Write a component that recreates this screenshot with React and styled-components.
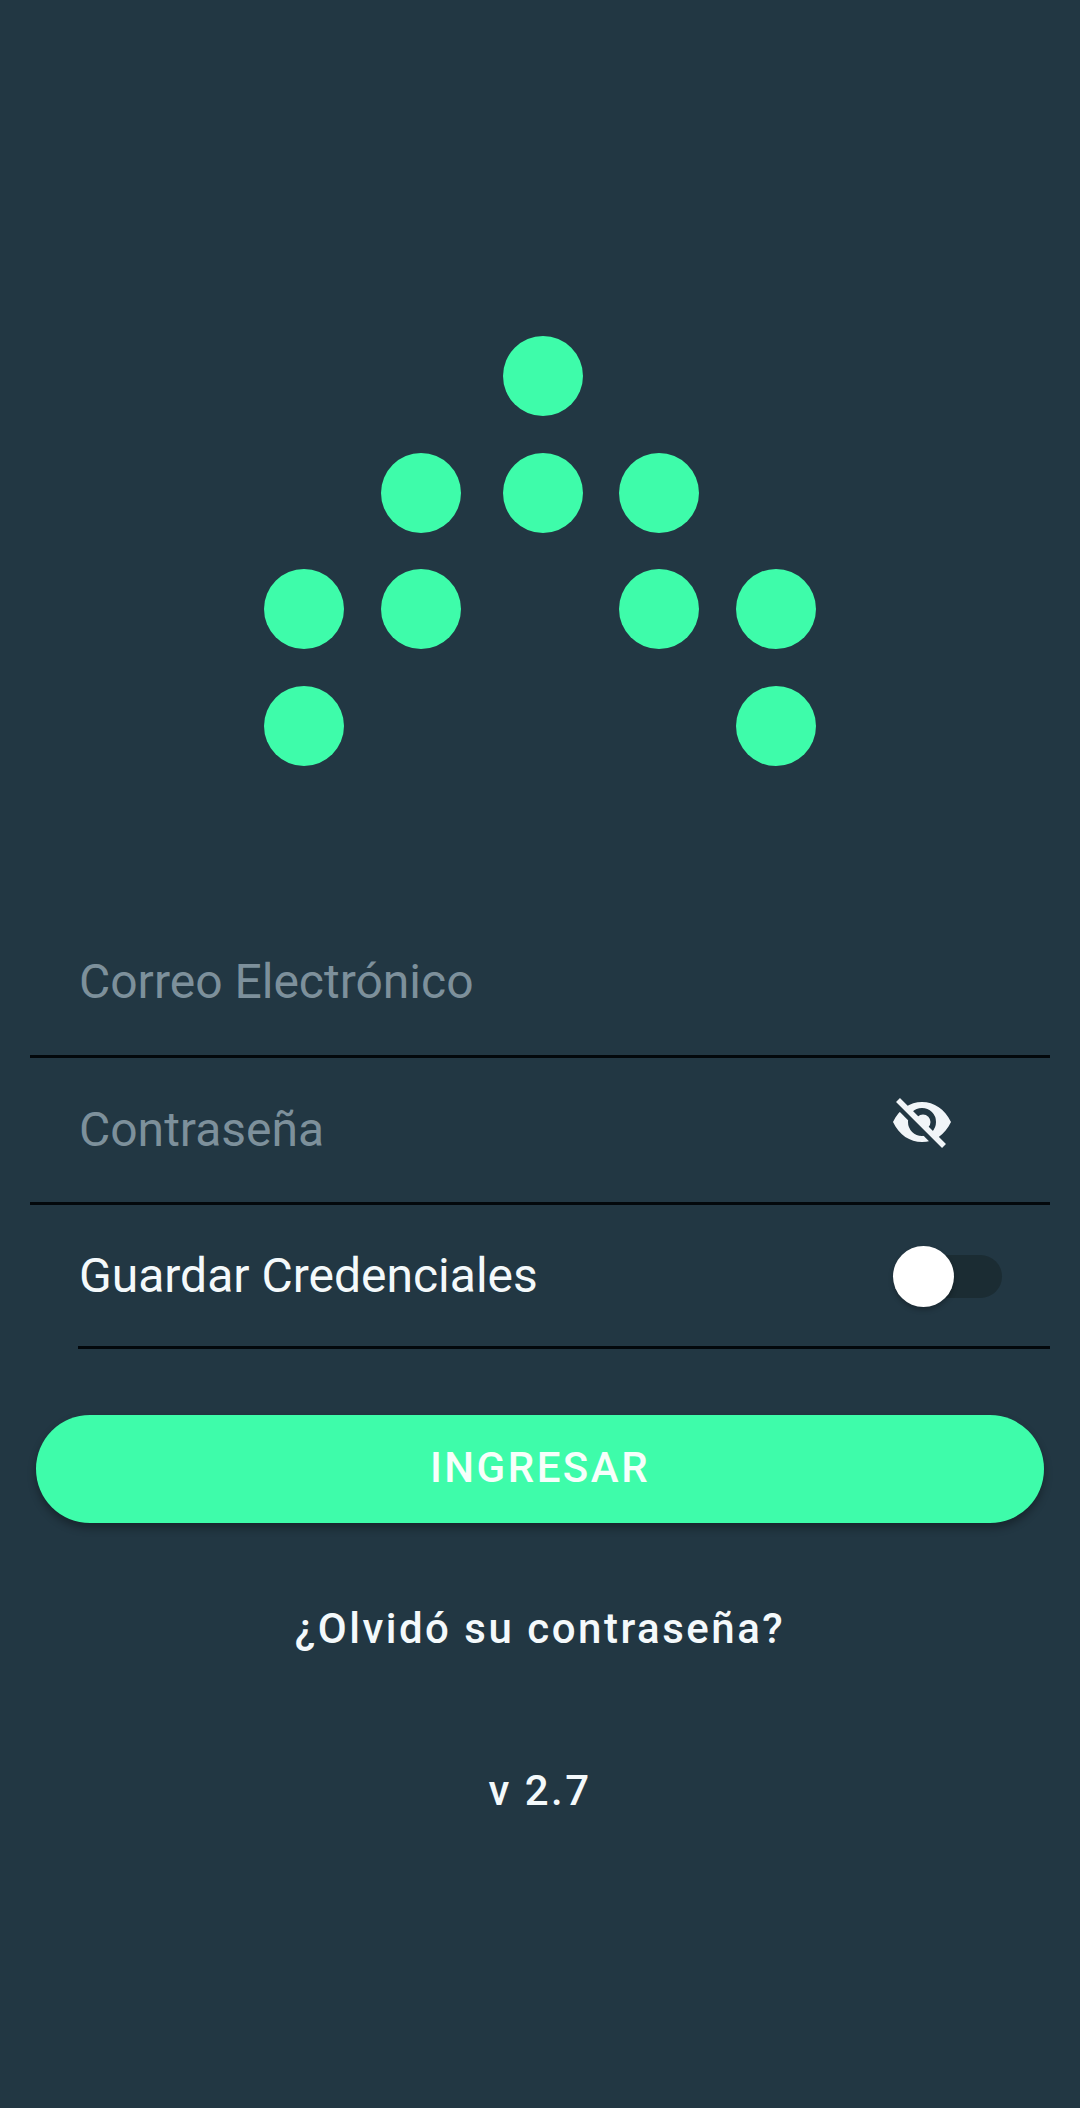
import React from "react";
import styled, { createGlobalStyle } from "styled-components";

const DOTS = [
  [543, 376],
  [421, 493],
  [543, 493],
  [659, 493],
  [304, 609],
  [421, 609],
  [659, 609],
  [776, 609],
  [304, 726],
  [776, 726],
];

const GlobalStyle = createGlobalStyle`
  html, body {
    margin: 0;
    padding: 0;
    background: #223743;
  }
  * {
    box-sizing: border-box;
  }
`;

const Page = styled.main`
  width: 1080px;
  height: 2108px;
  overflow: hidden;
  background: #223743;
  font-family: Roboto, "Liberation Sans", sans-serif;
  color: #f4f9fb;
  display: flex;
  flex-direction: column;
`;

const Logo = styled.svg`
  display: block;
  flex: none;
  width: 1080px;
  height: 909px;
`;

const Form = styled.div`
  display: flex;
  flex-direction: column;
  padding: 0 30px;
`;

const Row = styled.div`
  height: ${(p) => p.$height}px;
  margin-left: ${(p) => p.$inset || 0}px;
  padding-left: ${(p) => (p.$inset ? 1 : 49)}px;
  padding-right: ${(p) => p.$right || 0}px;
  padding-top: ${(p) => p.$top || 0}px;
  border-bottom: 3px solid #03080c;
  display: flex;
  align-items: center;
  justify-content: space-between;
`;

const FieldText = styled.span`
  font-size: 48px;
  line-height: 56px;
  color: ${(p) => (p.$placeholder ? "#7d909b" : "#f4f9fb")};
`;

const EyeIcon = styled.svg`
  width: 60px;
  height: 52px;
  margin-bottom: 16px;
  flex: none;
  display: block;
`;

const Toggle = styled.div`
  position: relative;
  width: 109px;
  height: 43px;
  flex: none;
  border-radius: 22px;
  background: #1b2c33;
`;

const Knob = styled.div`
  position: absolute;
  left: 0;
  top: -9px;
  width: 61px;
  height: 61px;
  border-radius: 50%;
  background: #ffffff;
  box-shadow: 0 3px 5px rgba(0, 0, 0, 0.25);
`;

const SubmitButton = styled.button`
  display: block;
  flex: none;
  width: 1008px;
  height: 108px;
  margin: 66px 0 0 36px;
  padding: 0 0 3px;
  border: 0;
  border-radius: 54px;
  background: #3efcaa;
  color: #f7fffb;
  font-family: inherit;
  font-size: 42px;
  font-weight: 500;
  letter-spacing: 2.5px;
  box-shadow: 0 5px 8px rgba(0, 0, 0, 0.32);
`;

const LinkText = styled.div`
  margin-top: ${(p) => p.$top}px;
  text-align: center;
  font-size: 42px;
  line-height: 48px;
  font-weight: 500;
  letter-spacing: 2.5px;
  color: #f4f9fb;
`;

const App = () => {
  return (
    <Page>
      <GlobalStyle />
      <Logo viewBox="0 0 1080 909">
        {DOTS.map(([cx, cy]) => (
          <circle key={`${cx}-${cy}`} cx={cx} cy={cy} r="40" fill="#3efcaa" />
        ))}
      </Logo>
      <Form>
        <Row $height={149}>
          <FieldText $placeholder>Correo Electrónico</FieldText>
        </Row>
        <Row $height={147} $right={98}>
          <FieldText $placeholder>Contraseña</FieldText>
          <EyeIcon viewBox="0 0 60 52">
            <path
              fill="#f1f5f8"
              fillRule="evenodd"
              d="M1 26C7 13 18 6 30 6s23 7 29 20c-6 13-17 20-29 20S7 39 1 26Zm29-14a14 14 0 1 0 0 28 14 14 0 0 0 0-28Z"
            />
            <circle cx="31" cy="26" r="7.5" fill="#f1f5f8" />
            <path stroke="#223743" strokeWidth="6" d="M4 8l43 43" />
            <path stroke="#f1f5f8" strokeWidth="5.5" d="M6 4l46 46" />
          </EyeIcon>
        </Row>
        <Row $height={144} $right={48} $inset={48} $top={1}>
          <FieldText>Guardar Credenciales</FieldText>
          <Toggle>
            <Knob />
          </Toggle>
        </Row>
      </Form>
      <SubmitButton>INGRESAR</SubmitButton>
      <LinkText $top={82}>¿Olvidó su contraseña?</LinkText>
      <LinkText $top={114}>v 2.7</LinkText>
    </Page>
  );
};

export default App;
